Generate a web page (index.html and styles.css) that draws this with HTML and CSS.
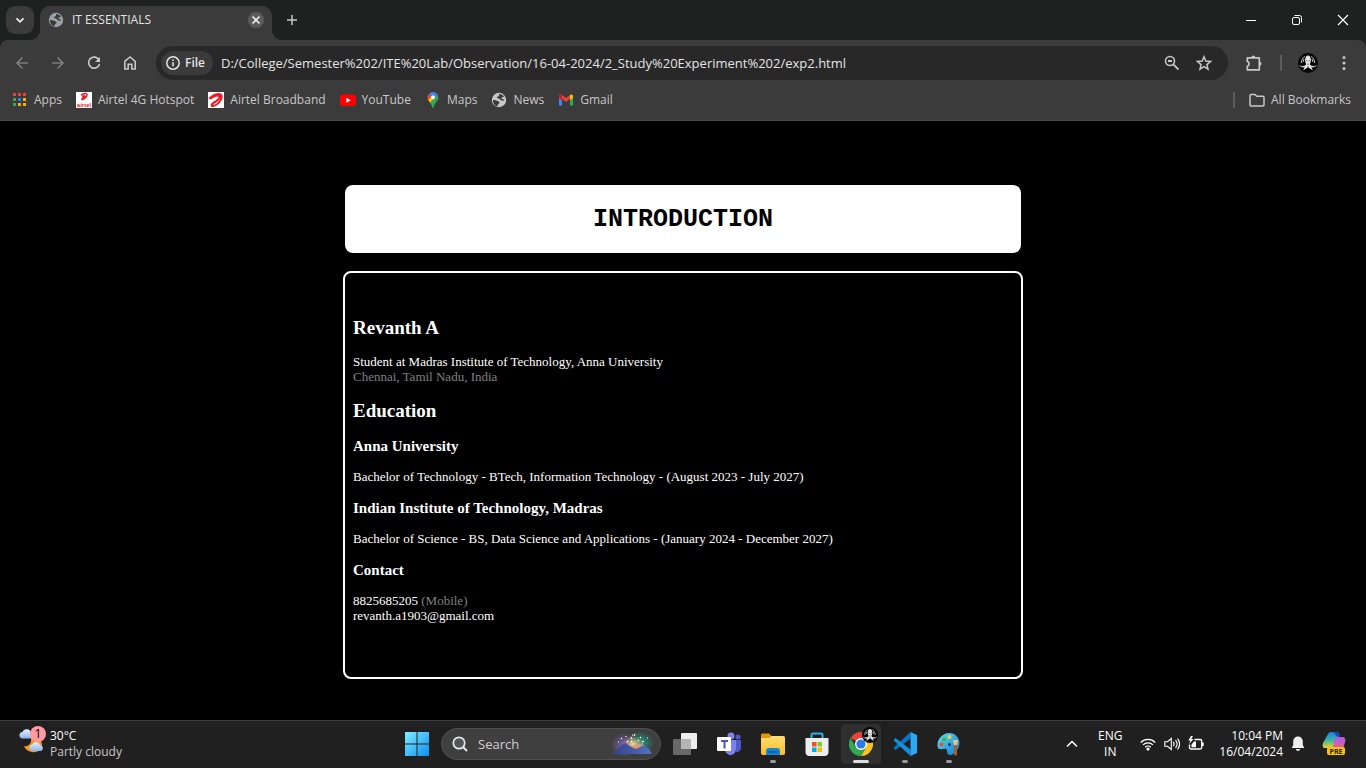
FILE: index.html
```
<!DOCTYPE html>
<html lang="en">
<head>
<meta charset="utf-8">
<title>IT ESSENTIALS</title>
<link rel="stylesheet" href="styles.css">
</head>
<body>
<svg class="defs" aria-hidden="true">
  <defs>
    <linearGradient id="winGrad" x1="0" y1="0" x2="1" y2="1"><stop offset="0" stop-color="#80eeff"/><stop offset="1" stop-color="#0a8df0"/></linearGradient>
    <linearGradient id="cloudGrad" x1="0" y1="0" x2="0" y2="1"><stop offset="0" stop-color="#e4f0ff"/><stop offset="1" stop-color="#8db5ef"/></linearGradient>
    <linearGradient id="folderGrad" x1="0" y1="0" x2="0" y2="1"><stop offset="0" stop-color="#ffdd73"/><stop offset="1" stop-color="#fbbd25"/></linearGradient>
    <linearGradient id="paletteGrad" x1="0" y1="0" x2="1" y2="1"><stop offset="0" stop-color="#5fe0f5"/><stop offset="1" stop-color="#1477cf"/></linearGradient>
    <linearGradient id="copilotA" x1="0" y1="0" x2="0" y2="1"><stop offset="0" stop-color="#1f7cf0"/><stop offset=".5" stop-color="#35b4a2"/><stop offset="1" stop-color="#f4d32a"/></linearGradient>
    <linearGradient id="copilotB" x1="0" y1="0" x2="0" y2="1"><stop offset="0" stop-color="#a95cf2"/><stop offset="1" stop-color="#f2607c"/></linearGradient>
    <linearGradient id="hillGrad" x1="0" y1="0" x2="1" y2="0"><stop offset="0" stop-color="#35408c"/><stop offset="1" stop-color="#5273bf"/></linearGradient>
    <radialGradient id="glowPurple"><stop offset="0" stop-color="#7c63b8"/><stop offset="1" stop-color="#7c63b8" stop-opacity="0"/></radialGradient>
    <radialGradient id="glowTeal"><stop offset="0" stop-color="#1f9d8b"/><stop offset="1" stop-color="#1f9d8b" stop-opacity="0"/></radialGradient>
    <radialGradient id="glowWarm"><stop offset="0" stop-color="#f5dda0"/><stop offset="1" stop-color="#e8a36b" stop-opacity="0"/></radialGradient>
  </defs>
  <symbol id="globe" viewBox="0 0 16 16"><circle cx="8" cy="8" r="7.200" fill="currentColor"/><path class="land" d="M2 8.200c1.500-.5 3 .1 3.800.6 1 .6 2.200.5 2.600 1.500.3 1-.7 1.500-1.300 1.900-.6.500-.5 1.200-.6 2.100C3.800 13.900 1.700 11 2 8.200zM8.200 1.900c1.800 0 3.800 1 4.800 2.700-.7.300-1 .9-1.800.9-.7 0-1.100.7-.6 1.200.6.600 1.800.3 2.800 1.100-.4 1-1.400 1.200-2.400.8-.9-.4-1.700-.5-2.100-1.300-.4-.9-1.600-.9-2.500-1.300-.8-.4-.5-1.200.2-1.400.9-.2 1.500-.4 1.500-1.100 0-.6-.3-1 .1-1.600z"/></symbol>
  <symbol id="skull" viewBox="0 0 20 20"><circle cx="10" cy="10" r="10" fill="#050505"/><path d="M10 2.500c1.700 0 2.900 2 2.900 4.600 0 1.900-.8 3.300-1 4.400l1.400 1.200 3.500.3-1.600 1.300-1.700-.1 1.300 3.200-2.800-1.900-2-1-2 1-2.800 1.900 1.300-3.200-1.700.1L3.200 13l3.500-.3 1.400-1.200c-.2-1.100-1-2.500-1-4.400 0-2.600 1.200-4.600 2.900-4.600z" fill="#e6e6e6"/><path d="M8.300 7.500l1 .6M11.700 7.500l-1 .6M10 10.500v1.500M9 14h2" fill="none" stroke="#222" stroke-width=".8"/><path d="M1.500 12.500c2.500 2 4.200 1.500 5.500.5M18.500 12.500c-2.500 2-4.200 1.500-5.500.5M3.200 10C3.500 6.500 5 4.500 7 3.500M16.800 10C16.500 6.500 15 4.500 13 3.500M5 9l1-3M15 9l-1-3" fill="none" stroke="#c4c4c4" stroke-width="1"/></symbol>
</svg>

<header class="browser">
  <div class="titlebar">
    <button class="tab-search" aria-label="Search tabs"><svg width="12" height="12" viewBox="0 0 12 12"><path d="M2.500 4.300L6 7.800l3.500-3.500" fill="none" stroke="currentColor" stroke-width="1.800"/></svg></button>
    <div class="tab">
      <svg class="globe" width="16" height="16"><use href="#globe"/></svg>
      <span class="tab-title">IT ESSENTIALS</span>
      <button class="tab-close" aria-label="Close tab"><svg width="16" height="16" viewBox="0 0 16 16"><path d="M4.500 4.500l7 7m0-7l-7 7" stroke="currentColor" stroke-width="1.600"/></svg></button>
    </div>
    <button class="new-tab" aria-label="New tab"><svg width="12" height="12" viewBox="0 0 12 12"><path d="M6 1v10M1 6h10" stroke="currentColor" stroke-width="1.500"/></svg></button>
    <div class="window-controls">
      <button aria-label="Minimize"><svg width="12" height="12" viewBox="0 0 12 12"><path d="M1 6.500h10" stroke="#fff"/></svg></button>
      <button aria-label="Restore"><svg width="12" height="12" viewBox="0 0 12 12"><rect x="1.500" y="3.500" width="7" height="7" rx="1.500" fill="none" stroke="#fff"/><path d="M3.500 1.500h5a2 2 0 0 1 2 2v5" fill="none" stroke="#fff"/></svg></button>
      <button aria-label="Close"><svg width="12" height="12" viewBox="0 0 12 12"><path d="M1 1l10 10M11 1L1 11" stroke="#fff" stroke-width="1.200"/></svg></button>
    </div>
  </div>

  <div class="toolbar">
    <button class="tool dim" aria-label="Back"><svg width="16" height="16" viewBox="0 0 16 16"><path d="M14 8H3m5.500-5.500L3 8l5.500 5.500" fill="none" stroke="currentColor" stroke-width="1.600"/></svg></button>
    <button class="tool dim" aria-label="Forward"><svg width="16" height="16" viewBox="0 0 16 16"><path d="M2 8h11M7.500 2.500L13 8l-5.500 5.500" fill="none" stroke="currentColor" stroke-width="1.600"/></svg></button>
    <button class="tool" aria-label="Reload"><svg width="16" height="16" viewBox="0 0 16 16"><path d="M13 5A5.500 5.500 0 1 0 13.500 9" fill="none" stroke="currentColor" stroke-width="1.700"/><path d="M14 2v5H9z" fill="currentColor"/></svg></button>
    <button class="tool" aria-label="Home"><svg width="16" height="16" viewBox="0 0 16 16"><path d="M2.800 14V6.300L8 2l5.200 4.300V14H9.800V9.300H6.200V14z" fill="none" stroke="currentColor" stroke-width="1.600"/></svg></button>
    <div class="omnibox">
      <button class="chip"><svg width="16" height="16" viewBox="0 0 16 16"><circle cx="8" cy="8" r="6.200" fill="none" stroke="currentColor" stroke-width="1.500"/><path d="M8 7.200v4M8 4.500v1.500" stroke="currentColor" stroke-width="1.600"/></svg>File</button>
      <input class="url" type="text" aria-label="Address" value="D:/College/Semester%202/ITE%20Lab/Observation/16-04-2024/2_Study%20Experiment%202/exp2.html">
      <button class="field-icon" aria-label="Zoom"><svg width="16" height="16" viewBox="0 0 16 16"><circle cx="6" cy="6" r="4.500" fill="none" stroke="currentColor" stroke-width="1.600"/><path d="M4 6h4M9.300 9.300l5.200 5.200" stroke="currentColor" stroke-width="1.800"/></svg></button>
      <button class="field-icon" aria-label="Bookmark this page"><svg width="16" height="16" viewBox="0 0 16 16"><path d="M8 1.800l1.800 4.300 4.700.4-3.600 3.100 1.100 4.600L8 11.700l-4 2.500 1.100-4.600-3.600-3.100 4.700-.4z" fill="none" stroke="currentColor" stroke-width="1.500"/></svg></button>
    </div>
    <div class="extras">
      <button class="extra" aria-label="Extensions"><svg width="18" height="18" viewBox="0 0 18 18"><path d="M2.300 3.800h12v12h-12v-3.600a2.500 2.500 0 0 0 0-4.800z" fill="none" stroke="currentColor" stroke-width="1.700" stroke-linejoin="round"/><path d="M6.300 3.500a2 2 0 0 1 4 0zM14.500 7.800a2 2 0 0 1 0 4z" fill="currentColor"/></svg></button>
      <span class="divider"></span>
      <button class="extra" aria-label="Profile"><svg width="20" height="20"><use href="#skull"/></svg></button>
      <button class="extra" aria-label="Menu"><svg width="16" height="16" viewBox="0 0 16 16" fill="currentColor"><circle cx="8" cy="2.500" r="1.500"/><circle cx="8" cy="8" r="1.500"/><circle cx="8" cy="13.500" r="1.500"/></svg></button>
    </div>
  </div>

  <nav class="bookmarks">
    <a class="bookmark" href="#apps"><svg width="16" height="16" viewBox="0 0 16 16"><path d="M1 1h3v3H1zM6 1h3v3H6zM11 1h3v3h-3z" fill="#ea4335"/><path d="M1 6h3v3H1z" fill="#34a853"/><path d="M6 6h3v3H6z" fill="#1a82f7"/><path d="M11 6h3v3h-3zM6 11h3v3H6zM11 11h3v3h-3z" fill="#fbae05"/><path d="M1 11h3v3H1z" fill="#34a853"/></svg>Apps</a>
    <a class="bookmark" href="#hotspot"><svg width="16" height="16" viewBox="0 0 16 16"><path fill="#fff" d="M0 0h16v16H0z"/><path d="M5 3.200C7.500 1 11 .8 11 2.800c0 1.700-2 3.600-4.500 4.700-.8.300-1-.5-.3-1C7.800 5.500 9 4.500 8.800 4 8.500 3.500 7 4 6 4.500" fill="none" stroke="#ed1c24" stroke-width="1.500"/><text x="8" y="15" text-anchor="middle" class="mini-logo">airtel</text></svg>Airtel 4G Hotspot</a>
    <a class="bookmark" href="#broadband"><svg width="16" height="16" viewBox="0 0 16 16"><path fill="#fff" d="M0 0h16v16H0z"/><path d="M1 5.800C3.500 2.500 7.500 1 10.500 1c3 0 4.500 1.500 4.200 4-.4 3.800-4 8.300-8.700 9.800-2.300.8-3.800-.3-3.300-2.200.5-1.800 2.500-2.800 4.300-3.900 2-1.200 3.700-2.500 3.500-3.500-.3-1.200-3.500-.5-6 1.400-1.500 1.200-4.600.9-3.500-.8z" fill="#ed1c24"/><path d="M12.300 5c.2 2.200-2.300 4.700-5.300 6.200-1.400.7-1.800 1.200-1.300 1.600.8.500 6.700-3 6.600-7.800z" fill="#fff"/></svg>Airtel Broadband</a>
    <a class="bookmark" href="#youtube"><svg width="16" height="16" viewBox="0 0 16 16"><rect y="2.500" width="16" height="11.500" rx="3" fill="#f00"/><path d="M6.400 5.800v5L10.700 8.300z" fill="#fff"/></svg>YouTube</a>
    <a class="bookmark" href="#maps"><svg width="16" height="16" viewBox="0 0 16 16"><path d="M8 0a5.300 5.300 0 0 0-4.100 1.900L8 5.500l3.300-4.300A5.300 5.300 0 0 0 8 0z" fill="#4285f4"/><path d="M3.900 1.900a5.300 5.300 0 0 0-.8 6L8 5z" fill="#ea4335"/><path d="M3.100 7.800L8 3l2 3-4.800 5C4.200 9.800 3.600 9 3.100 7.800z" fill="#fbbc04"/><path d="M12.400 2.400c1.500 2 1.100 4.300.2 5.900C11.500 10 9.200 12 8.700 15.500c-.2.700-1.200.7-1.400 0-.4-1.900-1.200-3.200-2.100-4.500z" fill="#34a853"/><path d="M11.300 1.200L8 5l1.500 1.500 3.200-3.700z" fill="#4285f4"/><circle cx="8" cy="5.300" r="1.900" fill="#fff"/></svg>Maps</a>
    <a class="bookmark" href="#news"><svg class="globe light" width="16" height="16"><use href="#globe"/></svg>News</a>
    <a class="bookmark" href="#gmail"><svg width="16" height="16" viewBox="0 0 16 16"><path d="M1 4v9.500h3V7z" fill="#4285f4"/><path d="M15 4v9.500h-3V7z" fill="#34a853"/><path d="M1 4.200C1 2.400 2.800 2 4 3l4 3 4-3v3.800L8 10 4 6.800v1.500L1 6z" fill="#ea4335"/><path d="M12 3c1.200-1 3-.6 3 1.200V6l-3 2.300z" fill="#fbbc04"/><path d="M1 4.200C1 2.400 2.800 2 4 3v5.300L1 6z" fill="#c5221f"/></svg>Gmail</a>
    <span class="divider push"></span>
    <a class="bookmark all" href="#all"><svg width="16" height="16" viewBox="0 0 16 16"><path d="M1 3.500c0-.6.400-1 1-1h4l1.700 1.800H14c.6 0 1 .4 1 1V13c0 .6-.4 1-1 1H2c-.6 0-1-.4-1-1z" fill="none" stroke="currentColor" stroke-width="1.500"/></svg>All Bookmarks</a>
  </nav>
</header>

<main class="page">
  <div class="profile">
    <h1 class="banner">INTRODUCTION</h1>
    <section class="card">
      <h2>Revanth A</h2>
      <p>Student at Madras Institute of Technology, Anna University<br><span class="muted">Chennai, Tamil Nadu, India</span></p>
      <h2>Education</h2>
      <h3>Anna University</h3>
      <p>Bachelor of Technology - BTech, Information Technology - (August 2023 - July 2027)</p>
      <h3>Indian Institute of Technology, Madras</h3>
      <p>Bachelor of Science - BS, Data Science and Applications - (January 2024 - December 2027)</p>
      <h3>Contact</h3>
      <p>8825685205 <span class="muted">(Mobile)</span><br>revanth.a1903@gmail.com</p>
    </section>
  </div>
</main>

<footer class="taskbar">
  <button class="weather">
    <span class="weather-icon">
      <svg width="26" height="28" viewBox="0 0 26 28"><path d="M13 12c6-1 11 1.500 11 7 0 5-5 8-10 7-4-.5-7-3-8-6 4 1 8-2 7-8z" fill="#f59a1c"/><path d="M4 12.500a3.300 3.300 0 0 1 .3-6.500A4.600 4.600 0 0 1 13 7a3 3 0 0 1 1 5.500z" fill="url(#cloudGrad)"/><path d="M14 25a3.200 3.200 0 0 1 0-6.300 4.400 4.400 0 0 1 8.200.5A3 3 0 0 1 23 25z" fill="url(#cloudGrad)"/></svg>
      <span class="badge">1</span>
    </span>
    <span class="stack"><span>30°C</span><span class="soft">Partly cloudy</span></span>
  </button>

  <div class="apps">
    <button class="app" aria-label="Start"><svg width="24" height="24" viewBox="0 0 24 24"><path d="M0 0h11.500v11.500H0zM12.500 0H24v11.500H12.500zM0 12.500h11.500V24H0zM12.500 12.500H24V24H12.500z" fill="url(#winGrad)"/></svg></button>
    <label class="search">
      <svg width="16" height="16" viewBox="0 0 16 16"><circle cx="7" cy="7" r="5.700" fill="#555" stroke="#e4e8ee" stroke-width="1.700"/><path d="M11 11l4 4" stroke="#e4e8ee" stroke-width="2"/></svg>
      <input type="text" placeholder="Search" aria-label="Search">
      <svg width="44" height="28" viewBox="0 0 44 28"><ellipse cx="14" cy="15" rx="13" ry="12" fill="url(#glowPurple)"/><ellipse cx="30" cy="13" rx="14" ry="12" fill="url(#glowTeal)"/><ellipse cx="23" cy="14" rx="11" ry="8" fill="url(#glowWarm)"/><path d="M3 23l4-3 5-5 3-2 8 5 9-4 7 5 2 3c1 2 0 2-1 2H5c-2 0-2-1-2-1z" fill="url(#hillGrad)"/><path d="M22 17l6-3 6 1-8 4z" fill="#ef956c"/><path d="M11 8l1 1m4-3v1m5 0l1 2m3-5l-1 2m7 1l-1 1m4 3l-2 1M8 12h1m12-1l1 1m7-2l-1 1m-6-6h1M17 11l1 1m14 2h1m4-6h1" stroke="#fff6d0" stroke-width="1.200"/></svg>
    </label>
    <button class="app" aria-label="Task view"><svg width="24" height="24" viewBox="0 0 24 24"><rect x="8" y="1" width="16" height="16" rx="1" fill="#eee"/><rect x="0" y="7" width="18" height="16" rx="1" fill="#777" fill-opacity=".85"/><path d="M8 7h10v10H8z" fill="#b5b5b5"/></svg></button>
    <button class="app" aria-label="Teams"><svg width="24" height="24" viewBox="0 0 24 24"><circle cx="14" cy="4" r="3.500" fill="#7b83eb"/><circle cx="21" cy="5" r="2.500" fill="#5059c9"/><path d="M17 8h7v7c0 4-2 5-5 5z" fill="#5059c9"/><path d="M9 8h10v8c0 4-2 7-5 7s-6-2-6-6z" fill="#7b83eb"/><rect y="5" width="14" height="14" rx="1" fill="#fff"/><path d="M4 8h7v2H8.500v6.500h-2V10H4z" fill="#4b53bc"/></svg></button>
    <button class="app running" aria-label="File Explorer"><svg width="24" height="24" viewBox="0 0 24 24"><path d="M0 7V3.500C0 2 .7 1.500 2 1.500h6l3 3V7z" fill="#dd9908"/><path d="M0 6h8l2.500-2H22c1.500 0 2 .7 2 2v15c0 1-.5 2-2 2H2c-1.500 0-2-1-2-2z" fill="url(#folderGrad)"/><path d="M5 23v-4c0-2 1-3 3-3h8c2 0 3 1 3 3v4z" fill="#1685cf"/><path d="M8 20h8" stroke="#09599d" stroke-width="1.500" stroke-linecap="round"/></svg></button>
    <button class="app" aria-label="Store"><svg width="24" height="24" viewBox="0 0 24 24"><path d="M6.500 6V3c0-1 .5-1.500 1.500-1.500h8c1 0 1.500.5 1.500 1.500v3" fill="none" stroke="#27b5ef" stroke-width="2"/><path d="M.5 6h23v14c0 2-1 4-4 4h-15c-3 0-4-2-4-4z" fill="#ededed"/><path d="M7 10h4.500v4.500H7z" fill="#f1511b"/><path d="M12.500 10H17v4.500h-4.500z" fill="#80cc28"/><path d="M7 15.500h4.500V20H7z" fill="#00adef"/><path d="M12.500 15.500H17V20h-4.500z" fill="#fbbc09"/></svg></button>
    <button class="app running active" aria-label="Chrome"><svg width="24" height="24" viewBox="0 0 24 24"><path d="M12 12L1.600 6A12 12 0 0 1 22.400 6H12z" fill="#e94335"/><path d="M12 12V6h10.400A12 12 0 0 1 12 24l5.200-9z" fill="#fcc31e"/><path d="M1.600 6A12 12 0 0 0 12 24l5.200-9H6.800z" fill="#31a852"/><circle cx="12" cy="12" r="6" fill="#fff"/><circle cx="12" cy="12" r="4.600" fill="#297be8"/></svg><svg class="app-badge" width="16" height="16"><use href="#skull"/></svg></button>
    <button class="app running" aria-label="Visual Studio Code"><svg width="24" height="24" viewBox="0 0 24 24"><path d="M.5 15.700L17.500 0v6.500L2.500 18z" fill="#0875c4"/><path d="M.5 8.300L2.500 6l15 11.500V24z" fill="#168ee0"/><path d="M17.500 0L24 3v18l-6.500 3z" fill="#2aa8f5"/></svg></button>
    <button class="app running" aria-label="Paint"><svg width="24" height="24" viewBox="0 0 24 24"><path d="M12 1c6.500 0 10.500 5 10.500 10S18 23 13 23c-4 0-2-5-4-6s-5 2-8-1C-1.500 9 5 1 12 1z" fill="url(#paletteGrad)"/><circle cx="4.500" cy="12.500" r="2" fill="#e6542f"/><circle cx="7" cy="7.500" r="2" fill="#36b24a"/><circle cx="12.500" cy="5" r="2" fill="#ffce2e"/><circle cx="12.500" cy="12.500" r="1.500" fill="#123b5d"/><path d="M16 8h5l-1 6h-3z" fill="#eac28f"/><path d="M17 13h3v9c0 2-3 2-3 0z" fill="#a45e2a"/></svg></button>
  </div>

  <div class="tray">
    <button aria-label="Show hidden icons"><svg width="16" height="16" viewBox="0 0 16 16"><path d="M3 10.500l5-5 5 5" fill="none" stroke="#fff" stroke-width="1.500"/></svg></button>
    <button class="lang"><span>ENG</span><span>IN</span></button>
    <button class="status" aria-label="Network, volume and battery">
      <svg width="16" height="16" viewBox="0 0 16 16" fill="none" stroke="#fff" stroke-width="1.200"><path d="M.8 6.500a10 10 0 0 1 14.400 0M3 8.900a7 7 0 0 1 10 0M5.200 11.200a4 4 0 0 1 5.600 0"/><circle cx="8" cy="13" r="1" fill="#fff"/></svg>
      <svg width="16" height="16" viewBox="0 0 16 16" fill="none" stroke="#fff" stroke-width="1.100"><path d="M.8 5.700h2.700L7.300 2.500v11L3.500 10.300H.8zM9.300 5.800c1 1.300 1 3.100 0 4.400M11.500 4.200c2 2.300 2 5.300 0 7.600M13.600 2.700c2.500 3.200 2.500 7.400 0 10.600"/></svg>
      <svg width="16" height="16" viewBox="0 0 16 16"><path d="M6.500 3.500h5.700c1 0 1.500.5 1.500 1.500v6.500c0 1-.5 1.500-1.500 1.500H3c-1 0-1.500-.5-1.500-1.500V8.500M15 6.500v3.500" fill="none" stroke="#fff" stroke-width="1.300"/><path d="M3.500 11.200V8.500L6 5.500h2v5.700zM3 0L.3 4.500h2L1 8l4.500-5H3.200L5 0z" fill="#fff"/></svg>
    </button>
    <button class="clock"><span>10:04 PM</span><span>16/04/2024</span></button>
    <button aria-label="Notifications"><svg width="16" height="16" viewBox="0 0 16 16"><path d="M8 .5c3 0 4.800 2 4.800 5v3.500l1.500 3H1.700l1.500-3V5.500c0-3 1.800-5 4.800-5zM5.800 13h4.400c-.4 2.600-4 2.600-4.400 0z" fill="#eee"/></svg></button>
    <button class="copilot" aria-label="Copilot preview"><svg width="24" height="24" viewBox="0 0 24 24"><path d="M6 2c.8-1.500 2-2 4-2h5c2 0 2 1 2.500 3L11 16H3c-2 0-3-2-2-5z" fill="url(#copilotA)"/><path d="M15 5h5c3 0 4 2 3 5l-2 8H8c2-1 3-3 4-7 .7-3 1-6 3-6z" fill="url(#copilotB)"/><path d="M10 0h5c2 0 2 1 2.500 4.500H15c-1.500-1-2-4.500-5-4.500z" fill="#174ea8"/><rect x="5" y="15" width="18" height="8" rx="2" fill="#fdc300"/><text x="14" y="22" text-anchor="middle" class="pre">PRE</text></svg></button>
  </div>
</footer>
</body>
</html>
```
FILE: styles.css
```
* { box-sizing: border-box; }

body {
  margin: 0;
  min-height: 100vh;
  display: flex;
  flex-direction: column;
  background: #000;
  color: #fff;
  font: 12px/16px "Open Sans", "Noto Sans", sans-serif;
}

button, input {
  margin: 0;
  padding: 0;
  border: 0;
  background: none;
  color: inherit;
  font: inherit;
}

input { outline: 0; min-width: 0; }
svg { display: block; flex: none; }
.defs { position: absolute; width: 0; height: 0; }

.globe { color: #9aa0a6; }
.globe.light { color: #c7c7c7; }
.land { fill: #3b3b3b; }

/* Browser window */
.browser { background: #1f2120; color: #c7c7c7; }

.titlebar {
  display: flex;
  height: 40px;
  padding-left: 6px;
}

.tab-search {
  display: grid;
  place-items: center;
  width: 28px;
  height: 28px;
  margin-top: 6px;
  border-radius: 9px;
  background: #3b3b3b;
  color: #eee;
}

.tab {
  position: relative;
  display: flex;
  align-items: center;
  gap: 8px;
  width: 232px;
  margin: 6px 0 0 6px;
  padding: 0 8px 6px;
  border-radius: 10px 10px 0 0;
  background: #3b3b3b;
  color: #e3e3e3;
}

.tab::before, .tab::after {
  content: "";
  position: absolute;
  bottom: 0;
  width: 10px;
  height: 10px;
}
.tab::before { right: 100%; background: radial-gradient(circle at 0 0, transparent 10px, #3b3b3b 10px); }
.tab::after { left: 100%; background: radial-gradient(circle at 100% 0, transparent 10px, #3b3b3b 10px); }

.tab-title { flex: 1; }
.tab-close { border-radius: 50%; background: #5c5c5c; color: #eee; }
.new-tab { display: grid; place-items: center; width: 40px; }

.window-controls { display: flex; margin-left: auto; }
.window-controls button { display: grid; place-items: center; width: 46px; }

.toolbar {
  display: flex;
  align-items: center;
  height: 46px;
  padding: 0 12px 0 4px;
  border-radius: 8px 8px 0 0;
  background: #3b3b3b;
}

.tool { display: grid; place-items: center; width: 36px; height: 34px; }
.dim { color: #7d7d7d; }

.omnibox {
  display: flex;
  flex: 1;
  align-items: center;
  height: 34px;
  margin: 0 16px 0 8px;
  padding: 0 8px 0 5px;
  border-radius: 17px;
  background: #282828;
}

.chip {
  display: flex;
  align-items: center;
  gap: 4px;
  height: 24px;
  padding: 0 8px 0 4px;
  border-radius: 12px;
  background: #3b3b3b;
  color: #e3e3e3;
  font-weight: 600;
}

.url { flex: 1; margin-left: 8px; color: #e3e3e3; font-size: 13px; }
.field-icon { display: grid; place-items: center; width: 32px; height: 32px; }

.extras { display: flex; align-items: center; gap: 16px; }
.extra { display: grid; place-items: center; width: 20px; height: 24px; }
.divider { width: 2px; height: 16px; background: #5c5c5c; }

.bookmarks {
  display: flex;
  align-items: center;
  gap: 14px;
  height: 35px;
  padding: 0 15px 6px 12px;
  border-bottom: 1px solid #4a4a4a;
  background: #3b3b3b;
}

.bookmark { display: flex; align-items: center; gap: 6px; color: #c7c7c7; text-decoration: none; }
.push { margin-left: auto; }
.mini-logo { fill: #ed1c24; font: bold 6px "Liberation Sans", sans-serif; }

/* Page */
.page {
  flex: 1;
  padding: 64px 0 40px;
  font-family: "Liberation Serif", "Times New Roman", serif;
}

.profile { width: 50%; max-width: 680px; margin: 0 auto; }

.banner {
  margin: 0 2px 18px;
  padding: 20px 0 18px;
  border-radius: 8px;
  background: #fff;
  color: #000;
  font: bold 25px/30px "Courier New", "Liberation Mono", monospace;
  text-align: center;
}

.card { padding: 44px 8px 54px; border: 2px solid #fff; border-radius: 8px; }
.card h2, .card h3 { margin: 16px 0 15px; }
.card h2 { font-size: 19px; line-height: 22px; }
.card h3 { font-size: 15px; line-height: 16px; }
.card h2:first-child { margin-top: 0; }
.card p { margin: 0; font-size: 13px; line-height: 15px; }
.muted { color: #808080; }

/* Taskbar */
.taskbar {
  display: grid;
  grid-template-columns: 1fr auto 1fr;
  height: 48px;
  padding-bottom: 2px;
  border-top: 1px solid #3e3e3e;
  background: #202020;
}

.weather { display: flex; align-items: center; justify-self: start; gap: 6px; padding-left: 18px; text-align: left; }
.weather-icon { position: relative; margin-top: -8px; }

.badge {
  position: absolute;
  top: 0;
  right: -2px;
  width: 16px;
  height: 16px;
  border-radius: 50%;
  background: #ff99a4;
  color: #000;
  text-align: center;
}

.stack, .lang, .clock { display: flex; flex-direction: column; }
.soft { color: #c7c7c7; }

.apps { display: flex; align-items: center; }

.app {
  position: relative;
  display: grid;
  place-items: center;
  width: 40px;
  height: 40px;
  margin: 0 2px;
  border-radius: 4px;
}

.app.active { background: #2f2f2f; }
.app-badge { position: absolute; top: 3px; right: 3px; }

.running::after {
  content: "";
  position: absolute;
  bottom: 1px;
  left: 17px;
  width: 6px;
  height: 3px;
  border-radius: 2px;
  background: #9a9a9a;
}
.running.active::after { left: 12px; width: 16px; background: #ddd; }

.search {
  display: flex;
  align-items: center;
  gap: 10px;
  width: 220px;
  height: 32px;
  margin: 0 2px;
  padding: 0 6px 0 10px;
  border: 1px solid #505050;
  border-radius: 16px;
  background: #3f3f3f;
}
.search input { flex: 1; font-size: 13px; }
.search input::placeholder { color: #d0d0d0; opacity: 1; }

.tray { display: flex; align-items: center; justify-self: end; padding-right: 20px; }
.lang { width: 36px; margin: 0 12px; text-align: center; }
.status { display: flex; gap: 8px; }
.clock { margin: 0 7px 0 15px; text-align: right; }
.copilot { margin-left: 16px; }
.pre { fill: #222; font: bold 7px "Open Sans", sans-serif; }
```
